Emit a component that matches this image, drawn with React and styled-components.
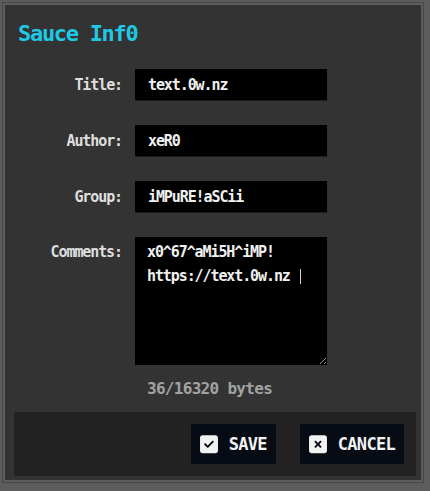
import React from 'react'
import styled, { createGlobalStyle } from 'styled-components'
import { FaSquareCheck, FaSquareXmark } from 'react-icons/fa6'

const GlobalStyle = createGlobalStyle`
  html, body {
    margin: 0;
    padding: 0;
    background: #5d5d5d;
  }
  body {
    font-family: "DejaVu Sans Mono", "Liberation Mono", monospace;
  }
`

const Screen = styled.div`
  width: 430px;
  height: 491px;
  box-sizing: border-box;
  padding: 2px 6px 8px 2px;
  background: #5d5d5d;
  display: flex;
`

const Bevel = styled.div`
  flex: 1;
  display: flex;
  border: 1px solid #474747;
  padding: 2px;
  background: #5d5d5d;
`

const Dialog = styled.div`
  flex: 1;
  display: flex;
  flex-direction: column;
  background: #333333;
  padding-bottom: 4px;
`

const Heading = styled.h1`
  margin: 0 0 20px;
  padding: 14px 13px 0;
  font-size: 22px;
  line-height: 30px;
  font-weight: bold;
  letter-spacing: -1.3px;
  color: #1fc8e4;
`

const Form = styled.div`
  display: grid;
  grid-template-columns: 104px 192px;
  column-gap: 13px;
  row-gap: 24px;
  padding-left: 13px;
`

const Label = styled.label`
  align-self: ${p => (p.$top ? 'start' : 'center')};
  margin-top: ${p => (p.$top ? '3px' : '0')};
  text-align: right;
  font-size: 15px;
  line-height: 24px;
  font-weight: bold;
  letter-spacing: -1.1px;
  color: #dedede;
`

const Field = styled.input`
  width: 192px;
  height: 32px;
  box-sizing: border-box;
  margin: 0;
  padding: 0 13px;
  border: none;
  border-bottom: 1px solid #1c1c1c;
  background: #000;
  color: #f0f0f0;
  font-family: inherit;
  font-size: 15px;
  font-weight: bold;
  letter-spacing: -1.1px;
  outline: none;
`

/* multi-line box: a resizable block so the grip shows in the corner */
const Memo = styled.div`
  width: 192px;
  height: 128px;
  box-sizing: border-box;
  padding: 3px 12px;
  background: #000;
  color: #f0f0f0;
  font-size: 15px;
  line-height: 24px;
  font-weight: bold;
  letter-spacing: -1.1px;
  white-space: pre;
  overflow: auto;
  resize: both;
`

const Caret = styled.span`
  display: inline-block;
  width: 1px;
  height: 15px;
  margin-left: 2px;
  vertical-align: -3px;
  background: #cfcfcf;
`

const ByteCount = styled.div`
  grid-column: 2;
  margin-top: -12px;
  padding-left: 12px;
  font-size: 16px;
  line-height: 24px;
  font-weight: bold;
  letter-spacing: -0.7px;
  color: #a2a2a2;
`

const Footer = styled.div`
  margin: 11px 5px 0 9px;
  padding: 12px;
  background: #222222;
  display: flex;
  justify-content: flex-end;
  gap: 24px;
`

const Button = styled.button`
  height: 40px;
  padding: 0 9px;
  display: inline-flex;
  align-items: center;
  gap: 11px;
  border: none;
  background: #060b14;
  color: #f2f2f2;
  font-family: inherit;
  font-size: 17px;
  font-weight: bold;
  letter-spacing: -0.7px;
  cursor: pointer;

  svg {
    width: 18px;
    height: 20.5px;
    flex: none;
  }
`

export default function App() {
  return (
    <>
      <GlobalStyle />
      <Screen>
        <Bevel>
          <Dialog>
            <Heading>Sauce Inf0</Heading>
            <Form>
              <Label htmlFor="title">Title:</Label>
              <Field id="title" defaultValue="text.0w.nz" />
              <Label htmlFor="author">Author:</Label>
              <Field id="author" defaultValue="xeR0" />
              <Label htmlFor="group">Group:</Label>
              <Field id="group" defaultValue="iMPuRE!aSCii" />
              <Label $top>Comments:</Label>
              <Memo role="textbox" aria-multiline="true">
                {'x0^67^aMi5H^iMP!\nhttps://text.0w.nz '}
                <Caret />
              </Memo>
              <ByteCount>36/16320 bytes</ByteCount>
            </Form>
            <Footer>
              <Button type="button">
                <FaSquareCheck />
                SAVE
              </Button>
              <Button type="button">
                <FaSquareXmark />
                CANCEL
              </Button>
            </Footer>
          </Dialog>
        </Bevel>
      </Screen>
    </>
  )
}
